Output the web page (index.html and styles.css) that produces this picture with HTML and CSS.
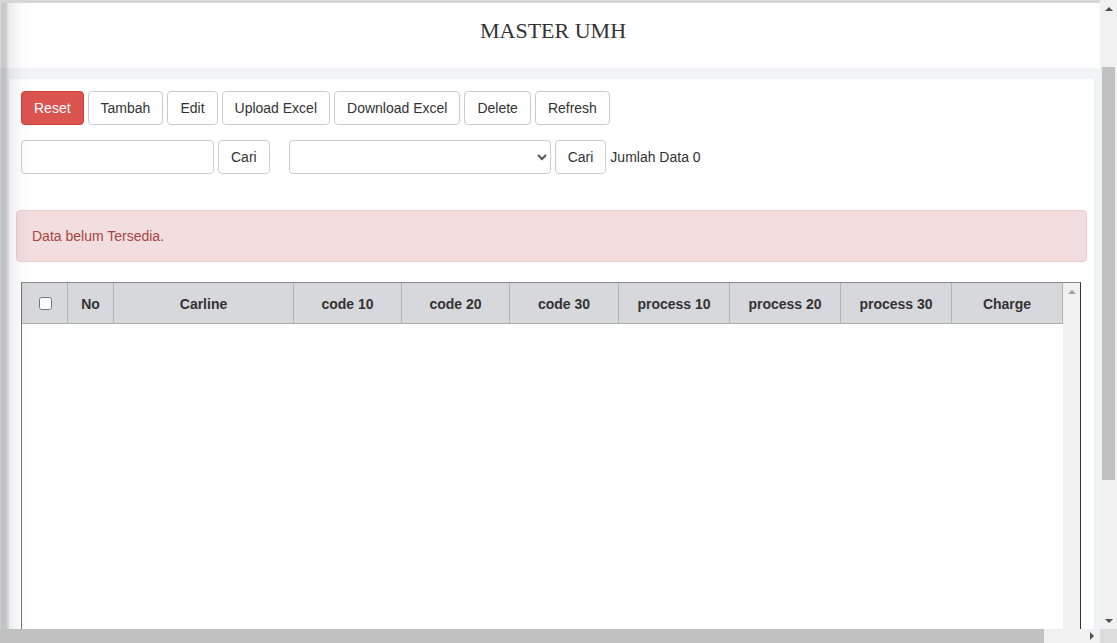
FILE: index.html
```html
<!DOCTYPE html>
<html lang="id">
<head>
<meta charset="utf-8">
<title>MASTER UMH</title>
<link rel="stylesheet" href="styles.css">
</head>
<body>
<div class="window">
  <div class="viewport">
    <div class="page">
      <header class="title-bar"><h1 class="title">MASTER UMH</h1></header>
      <main class="card">
        <div class="toolbar">
          <button class="btn btn-danger">Reset</button>
          <button class="btn">Tambah</button>
          <button class="btn">Edit</button>
          <button class="btn">Upload Excel</button>
          <button class="btn">Download Excel</button>
          <button class="btn">Delete</button>
          <button class="btn">Refresh</button>
        </div>
        <div class="search-row">
          <input class="form-input" type="text">
          <button class="btn">Cari</button>
          <select class="form-select"><option></option></select>
          <button class="btn">Cari</button>
          <span class="count">Jumlah Data 0</span>
        </div>
        <div class="alert">Data belum Tersedia.</div>
        <div class="grid">
          <div class="grid-main">
            <div class="grid-head">
              <div class="cell c-check"><input type="checkbox" class="check"></div>
              <div class="cell c-no">No</div>
              <div class="cell c-carline">Carline</div>
              <div class="cell c-code">code 10</div>
              <div class="cell c-code">code 20</div>
              <div class="cell c-code30">code 30</div>
              <div class="cell c-proc">process 10</div>
              <div class="cell c-proc">process 20</div>
              <div class="cell c-proc">process 30</div>
              <div class="cell c-proc">Charge</div>
            </div>
            <div class="grid-body"></div>
          </div>
          <div class="grid-scroll"><span class="tri-up light"></span></div>
        </div>
      </main>
    </div>
    <div class="vscroll">
      <div class="sb-btn"><span class="tri-up"></span></div>
      <div class="vthumb"></div>
      <div class="sb-fill"></div>
      <div class="sb-btn"><span class="tri-down"></span></div>
    </div>
  </div>
  <div class="hscroll">
    <div class="hthumb"></div>
    <div class="htrack"><span class="tri-right"></span></div>
    <div class="corner"></div>
  </div>
</div>
</body>
</html>
```
FILE: styles.css
```css
* { box-sizing: border-box; }
html, body { margin: 0; padding: 0; }
body {
  font-family: "Liberation Sans", Arial, sans-serif;
  font-size: 14px;
  color: #333;
  background: #fff;
  overflow: hidden;
}
.window {
  width: 1117px;
  height: 643px;
  display: flex;
  flex-direction: column;
}
.viewport {
  display: flex;
  height: 629px;
}
.page {
  position: relative;
  width: 1100px;
  height: 629px;
  overflow: hidden;
  background: #f3f4f8;
  border-top: 3px solid #d6d6d6;
}
.page::before {
  content: "";
  position: absolute;
  left: 0;
  top: 0;
  bottom: 0;
  width: 32px;
  pointer-events: none;
  z-index: 5;
  background: linear-gradient(to right,
    rgba(0,0,0,0.08) 0px,
    rgba(0,0,0,0.22) 1px,
    rgba(0,0,0,0.2) 6px,
    rgba(0,0,0,0.07) 9px,
    rgba(0,0,0,0.02) 20px,
    rgba(0,0,0,0) 32px);
}
.title-bar {
  height: 65px;
  background: #fff;
  padding: 17px 0 0 6px;
  text-align: center;
}
.title {
  margin: 0;
  font-family: "Liberation Serif", "Times New Roman", serif;
  font-weight: normal;
  font-size: 22px;
  line-height: 22px;
  color: #333;
}
.card {
  margin: 11px 0 0 9px;
  width: 1085px;
  height: 560px;
  background: #fff;
  border-radius: 3px;
  box-shadow: 0 1px 3px rgba(0,0,0,0.08);
  padding: 12px 7px 0;
  overflow: hidden;
}
.toolbar, .search-row {
  display: flex;
  align-items: center;
  gap: 4px;
  padding: 0 5px;
  height: 34px;
}
.search-row { margin-top: 15px; }
.btn {
  height: 34px;
  padding: 1px 12px 0;
  font-family: inherit;
  font-size: 14px;
  line-height: 31px;
  color: #333;
  background: #fff;
  border: 1px solid #ccc;
  border-radius: 4px;
}
.btn-danger {
  background: #d9534f;
  border-color: #d43f3a;
  color: #fff;
}
.form-input {
  width: 193px;
  height: 34px;
  border: 1px solid #ccc;
  border-radius: 4px;
  background: #fff;
  font: inherit;
}
.form-select {
  width: 262px;
  height: 34px;
  margin-left: 15px;
  border: 1px solid #ccc;
  border-radius: 4px;
  background: #fff;
  font: inherit;
  color: #555;
}
.count {
  line-height: 20px;
  margin-top: -1px;
}
.alert {
  margin: 36px 0 20px;
  padding: 15px;
  line-height: 20px;
  background: #f2dede;
  border: 1px solid #ebccd1;
  border-radius: 4px;
  color: #a94442;
}
.grid {
  display: flex;
  margin: 0 6px 0 5px;
  height: 400px;
  border: 1px solid #777;
  border-top-color: #8a8a8a;
  border-right-color: #333;
}
.grid-main { width: 1041px; }
.grid-head {
  display: flex;
  height: 41px;
  background: #d7d8dc;
  border-bottom: 1px solid #adadad;
}
.cell {
  display: flex;
  align-items: center;
  justify-content: center;
  padding-top: 2px;
  border-right: 1px solid #b3b3b3;
  font-weight: bold;
  color: #333;
}
.c-check { width: 46px; padding-top: 0; }
.c-no { width: 46px; }
.c-carline { width: 180px; }
.c-code { width: 108px; }
.c-code30 { width: 109px; }
.c-proc { width: 111px; }
.check {
  margin: 0 0 0 1px;
  width: 13px;
  height: 13px;
}
.grid-body { background: #fff; }
.grid-scroll {
  width: 17px;
  background: #f1f1f1;
  display: flex;
  justify-content: center;
  padding-top: 7px;
}
.tri-up, .tri-down, .tri-right {
  display: block;
  width: 0;
  height: 0;
}
.tri-up {
  border-left: 4px solid transparent;
  border-right: 4px solid transparent;
  border-bottom: 4px solid #505050;
}
.tri-up.light { border-bottom-color: #a3a3a3; }
.tri-down {
  border-left: 4px solid transparent;
  border-right: 4px solid transparent;
  border-top: 4px solid #505050;
}
.tri-right {
  border-top: 4px solid transparent;
  border-bottom: 4px solid transparent;
  border-left: 4px solid #505050;
}
.vscroll {
  width: 17px;
  height: 629px;
  background: #f1f1f1;
  display: flex;
  flex-direction: column;
}
.sb-btn {
  height: 17px;
  display: flex;
  align-items: center;
  justify-content: center;
  flex: none;
}
.vthumb {
  margin: 50px 2px 0;
  height: 413px;
  background: #c1c1c1;
  flex: none;
}
.sb-fill { flex: 1; }
.hscroll {
  display: flex;
  height: 14px;
}
.hthumb {
  width: 1044px;
  background: #c1c1c1;
}
.htrack {
  width: 56px;
  background: #f1f1f1;
  display: flex;
  align-items: center;
  justify-content: flex-end;
  padding-right: 6px;
}
.corner {
  width: 17px;
  background: #dcdcdc;
}
```
